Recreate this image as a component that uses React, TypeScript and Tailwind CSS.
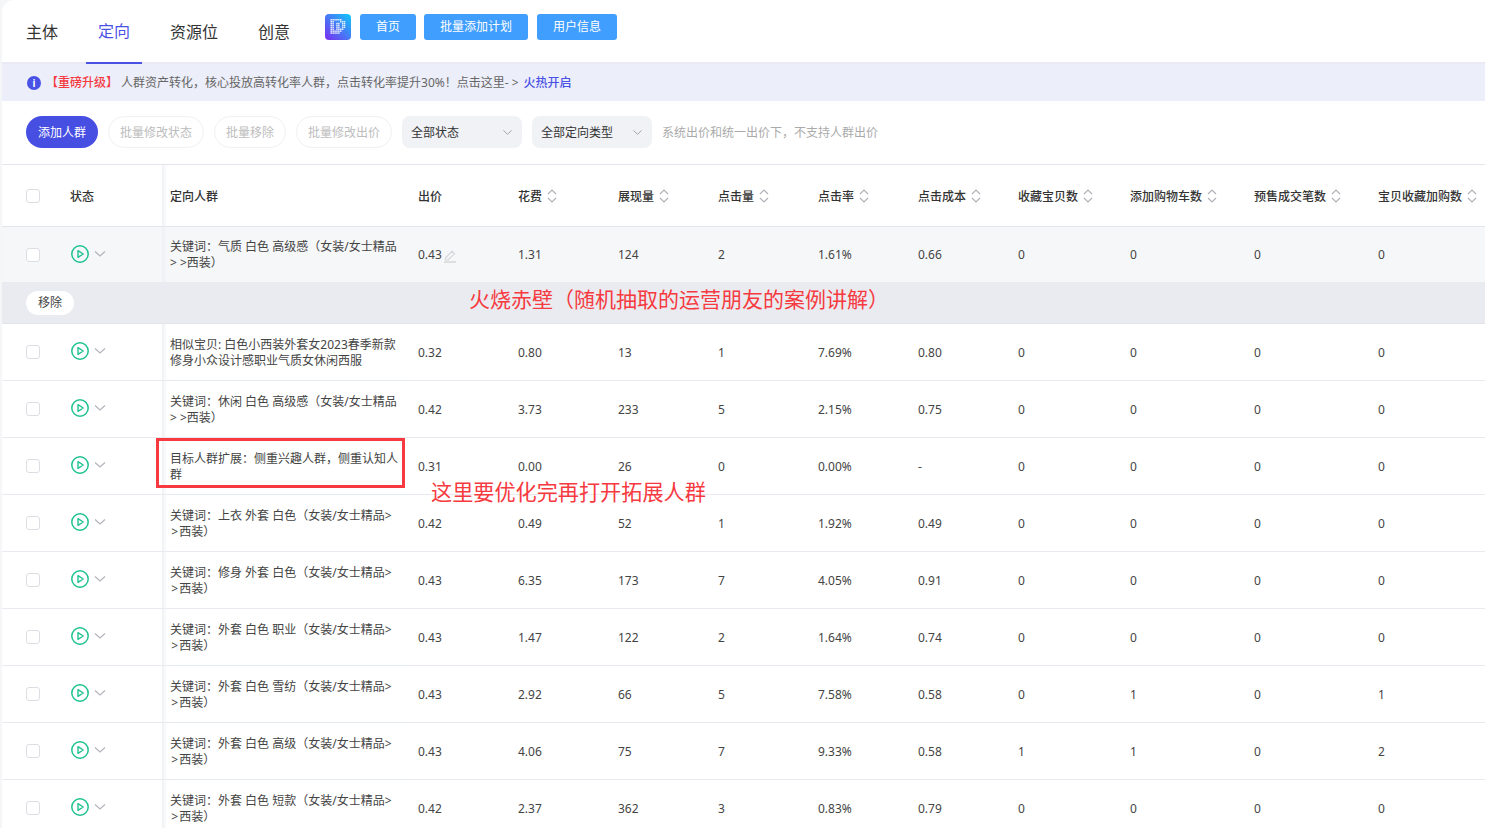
import { ChevronDown } from "lucide-react";

const COLS = "grid grid-cols-[60px_100px_248px_100px_100px_100px_100px_100px_100px_112px_124px_124px_115px]";

const HEADERS = [
  { label: "花费" },
  { label: "展现量" },
  { label: "点击量" },
  { label: "点击率" },
  { label: "点击成本" },
  { label: "收藏宝贝数" },
  { label: "添加购物车数" },
  { label: "预售成交笔数" },
  { label: "宝贝收藏加购数" },
];

type Row = { lines: [string, string]; bid: string; values: string[] };

const ROWS: Row[] = [
  { lines: ["相似宝贝: 白色小西装外套女2023春季新款", "修身小众设计感职业气质女休闲西服"], bid: "0.32", values: ["0.80", "13", "1", "7.69%", "0.80", "0", "0", "0", "0"] },
  { lines: ["关键词：休闲 白色 高级感（女装/女士精品", "> >西装）"], bid: "0.42", values: ["3.73", "233", "5", "2.15%", "0.75", "0", "0", "0", "0"] },
  { lines: ["目标人群扩展：侧重兴趣人群，侧重认知人", "群"], bid: "0.31", values: ["0.00", "26", "0", "0.00%", "-", "0", "0", "0", "0"] },
  { lines: ["关键词：上衣 外套 白色（女装/女士精品>", "\u200a>\u200a西装）"], bid: "0.42", values: ["0.49", "52", "1", "1.92%", "0.49", "0", "0", "0", "0"] },
  { lines: ["关键词：修身 外套 白色（女装/女士精品>", "\u200a>\u200a西装）"], bid: "0.43", values: ["6.35", "173", "7", "4.05%", "0.91", "0", "0", "0", "0"] },
  { lines: ["关键词：外套 白色 职业（女装/女士精品>", "\u200a>\u200a西装）"], bid: "0.43", values: ["1.47", "122", "2", "1.64%", "0.74", "0", "0", "0", "0"] },
  { lines: ["关键词：外套 白色 雪纺（女装/女士精品>", "\u200a>\u200a西装）"], bid: "0.43", values: ["2.92", "66", "5", "7.58%", "0.58", "0", "1", "0", "1"] },
  { lines: ["关键词：外套 白色 高级（女装/女士精品>", "\u200a>\u200a西装）"], bid: "0.43", values: ["4.06", "75", "7", "9.33%", "0.58", "1", "1", "0", "2"] },
  { lines: ["关键词：外套 白色 短款（女装/女士精品>", "\u200a>\u200a西装）"], bid: "0.42", values: ["2.37", "362", "3", "0.83%", "0.79", "0", "0", "0", "0"] },
];

// dotted "D" of the logo
const LOGO_D = ["111111..", "11...111", "11.11.11", "11.11.11", "11.11.11", "11.1111.", "111111..", "11111..."];

function Logo() {
  return (
    <svg width="26" height="26" viewBox="0 0 26 26" className="shrink-0">
      <defs>
        <linearGradient id="logo-bg" x1="1" y1="0" x2="0" y2="1">
          <stop offset="0" stopColor="#12c8fb" />
          <stop offset="1" stopColor="#7a2cf0" />
        </linearGradient>
      </defs>
      <rect width="26" height="26" rx="4" fill="url(#logo-bg)" />
      {LOGO_D.map((line, y) =>
        line.split("").map((c, x) =>
          c === "1" ? <rect key={`${x}-${y}`} x={5.5 + x * 1.9} y={5 + y * 1.9} width="1.5" height="1.5" fill="#fff" opacity="0.85" /> : null
        )
      )}
    </svg>
  );
}

function PlayStatus() {
  return (
    <div className="-mt-[2px] flex items-center gap-[5px] pl-[9px]">
      <svg width="18" height="18" viewBox="0 0 18 18" fill="none" stroke="#1fc28f">
        <circle cx="9" cy="9" r="8.2" strokeWidth="1.5" />
        <path d="M7 5.6 12.2 9 7 12.4Z" strokeWidth="1.4" strokeLinejoin="round" />
      </svg>
      <svg width="12" height="8" viewBox="0 0 12 8" fill="none" stroke="#b4b6bc" strokeWidth="1.3">
        <path d="M1 1.5 6 6l5-4.5" />
      </svg>
    </div>
  );
}

function SortIcon() {
  return (
    <svg width="10" height="14" viewBox="0 0 10 14" fill="none" stroke="#b0b2b8" strokeWidth="1.2" className="-mt-[2px] shrink-0">
      <path d="M1 5 5 1l4 4" />
      <path d="M1 9l4 4 4-4" />
    </svg>
  );
}

function EditIcon() {
  return (
    <svg width="14" height="14" viewBox="0 0 14 14" fill="none" stroke="#d6d7da" strokeWidth="1.2" className="ml-px mt-[2px]">
      <path d="M2.5 9 9 2.2l2.6 2.4L5 11H2.5Z" strokeLinejoin="round" />
      <path d="M1 13h12" strokeWidth="1.6" />
    </svg>
  );
}

function Checkbox() {
  return (
    <div className="ml-[24px] h-[14px] w-[14px] rounded-[3px] border border-[#dcdee3] bg-white" />
  );
}

function TopButton({ label, width }: { label: string; width: string }) {
  return (
    <div className={`flex h-[26px] items-center justify-center rounded-[3px] bg-[#409eff] text-xs text-white ${width}`}>
      {label}
    </div>
  );
}

function GhostButton({ label, width }: { label: string; width: string }) {
  return (
    <div className={`flex h-[32px] items-center justify-center rounded-full border border-[#f0f1f3] pt-px text-xs text-[#bdbdbd] ${width}`}>
      {label}
    </div>
  );
}

function SelectBox({ label }: { label: string }) {
  return (
    <div className="flex h-[32px] w-[120px] items-center justify-between rounded-lg bg-[#f1f2f6] pl-[9px] pr-[7px] text-xs text-[#333]">
      <span className="pt-px">{label}</span>
      <ChevronDown size={15} color="#9a9ca3" strokeWidth={1.5} />
    </div>
  );
}

function AudienceCell({ lines, tight }: { lines: [string, string]; tight?: boolean }) {
  return (
    <div className={`flex h-full items-center whitespace-pre pl-[8px] text-xs leading-4 text-[#444] shadow-[inset_5px_0_4px_-3px_#eceef2] ${tight ? "" : "pt-[2px]"}`}>
      <div>
        {lines[0]}
        <br />
        {lines[1]}
      </div>
    </div>
  );
}

function ValueCells({ bid, values, edit }: { bid: string; values: string[]; edit?: boolean }) {
  return (
    <>
      <div className="flex items-center pl-[8px] pt-[1px]">
        {bid}
        {edit && <EditIcon />}
      </div>
      {values.map((v, i) => (
        <div key={i} className="flex items-center pl-[8px] pt-[1px]">
          {v}
        </div>
      ))}
    </>
  );
}

export default function App() {
  return (
    <div className="relative h-[828px] w-[1485px] overflow-hidden bg-[#f5f6f8] pl-[2px] text-xs text-[#444] [font-family:'Noto_Sans','Noto_Sans_CJK_SC',sans-serif]">
      <div className="h-full rounded-tl-xl bg-white">
        {/* tabs and quick links */}
        <div className="flex h-[64px] border-b-2 border-[#e9eaf3] pl-[12px]">
          <div className="flex gap-4">
            {["主体", "定向", "资源位", "创意"].map((t) => (
              <div
                key={t}
                className={
                  t === "定向"
                    ? "flex h-[64px] items-center border-b-2 border-[#4a52e6] px-3 text-base text-[#4a52e6]"
                    : "flex h-[64px] items-center px-3 text-base text-[#333]"
                }
              >
                {t}
              </div>
            ))}
          </div>
          <div className="ml-[23px] flex items-start gap-[8px] pt-[14px]">
            <Logo />
            <div className="ml-px flex gap-[8px]">
              <TopButton label="首页" width="w-[56px]" />
              <TopButton label="批量添加计划" width="w-[104px]" />
              <div className="ml-px">
                <TopButton label="用户信息" width="w-[80px]" />
              </div>
            </div>
          </div>
        </div>

        {/* notice */}
        <div className="flex h-[37px] items-center bg-[#eceef9] pl-[25px] text-xs text-[#666]">
          <div className="flex h-[14px] w-[14px] items-center justify-center rounded-full bg-[#4a52e6] text-[10px] font-bold leading-none text-white">
            i
          </div>
          <span className="ml-[5px] font-medium text-[#f5393f]">【重磅升级】</span>
          <span className="ml-[3px]">人群资产转化，核心投放高转化率人群，点击转化率提升30%！点击这里- &gt;</span>
          <span className="ml-[5px] font-medium text-[#4a52e6]">火热开启</span>
        </div>

        {/* toolbar */}
        <div className="flex h-[64px] items-start gap-[10px] border-b border-[#e4e5ec] pl-[24px] pt-[15px]">
          <div className="flex h-[32px] w-[72px] items-center justify-center rounded-full bg-[#474fe3] pt-px text-xs text-white">添加人群</div>
          <GhostButton label="批量修改状态" width="w-[96px]" />
          <GhostButton label="批量移除" width="w-[72px]" />
          <GhostButton label="批量修改出价" width="w-[96px]" />
          <SelectBox label="全部状态" />
          <SelectBox label="全部定向类型" />
          <div className="flex h-[32px] items-center pt-px text-xs text-[#aaa]">系统出价和统一出价下，不支持人群出价</div>
        </div>

        {/* table head */}
        <div className={`${COLS} h-[62px] items-stretch border-b border-[#e4e5ec] font-medium text-[#333]`}>
          <div className="flex items-center"><Checkbox /></div>
          <div className="flex items-center pl-[8px] pt-[2px]">状态</div>
          <div className="flex items-center pl-[8px] pt-[2px] shadow-[inset_5px_0_4px_-3px_#eceef2]">定向人群</div>
          <div className="flex items-center pl-[8px] pt-[2px]">出价</div>
          {HEADERS.map((h) => (
            <div key={h.label} className="flex items-center gap-[5px] whitespace-nowrap pl-[8px] pt-[2px]">
              {h.label}
              <SortIcon />
            </div>
          ))}
        </div>

        {/* selected row */}
        <div className={`${COLS} h-[55px] items-stretch bg-[#f6f7f9]`}>
          <div className="flex items-center"><Checkbox /></div>
          <div className="flex items-center"><PlayStatus /></div>
          <AudienceCell tight lines={["关键词：气质 白色 高级感（女装/女士精品", "> >西装）"]} />
          <ValueCells bid="0.43" edit values={["1.31", "124", "2", "1.61%", "0.66", "0", "0", "0", "0"]} />
        </div>

        {/* bulk action bar */}
        <div className="flex h-[42px] items-center border-b border-[#e3e5ea] bg-[#e9ebf0] pl-[24px]">
          <div className="flex h-[24px] w-[48px] items-center justify-center rounded-full bg-white pt-px text-xs text-[#444]">移除</div>
        </div>

        {ROWS.map((r) => (
          <div key={r.lines[0]} className={`${COLS} h-[57px] items-stretch border-b border-[#e9eaf0]`}>
            <div className="flex items-center"><Checkbox /></div>
            <div className="flex items-center"><PlayStatus /></div>
            <AudienceCell lines={r.lines} />
            <ValueCells bid={r.bid} values={r.values} />
          </div>
        ))}
      </div>

      {/* annotations drawn over the screenshot */}
      <div className="absolute left-[469px] top-[285px] whitespace-nowrap text-[21px] leading-7 text-[#f63a3f]">火烧赤壁（随机抽取的运营朋友的案例讲解）</div>
      <div className="absolute left-[156px] top-[438px] h-[50px] w-[249px] border-[3px] border-[#f63a3f]" />
      <div className="absolute left-[431px] top-[478px] whitespace-nowrap text-[21.15px] leading-7 text-[#f63a3f]">这里要优化完再打开拓展人群</div>
    </div>
  );
}
